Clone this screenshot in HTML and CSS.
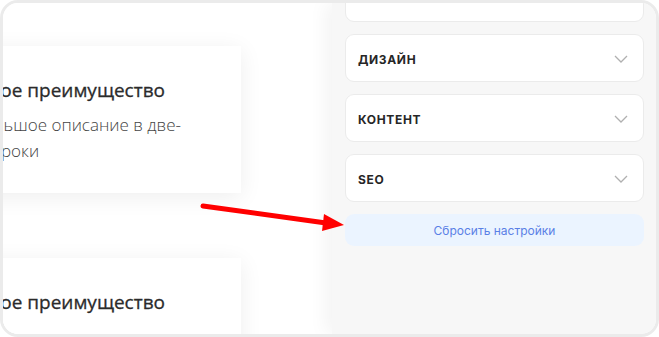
FILE: index.html
```html
<!DOCTYPE html>
<html lang="ru">
<head>
<meta charset="utf-8">
<link rel="stylesheet" href="styles.css">
</head>
<body>
<div class="frame">
  <div class="canvas">
    <div class="feature">
      <h3 class="feature-title">Главное преимущество</h3>
      <p class="feature-text">Небольшое описание в две-три строки</p>
    </div>
    <div class="feature">
      <h3 class="feature-title">Главное преимущество</h3>
      <p class="feature-text">Небольшое описание в две-три строки</p>
    </div>
  </div>
  <div class="panel">
    <div class="section section-cut"></div>
    <div class="section"><span class="section-label">Дизайн</span><svg class="chev" viewBox="0 0 14 8"><path d="M1 1l6 6 6-6"/></svg></div>
    <div class="section"><span class="section-label">Контент</span><svg class="chev" viewBox="0 0 14 8"><path d="M1 1l6 6 6-6"/></svg></div>
    <div class="section"><span class="section-label">SEO</span><svg class="chev" viewBox="0 0 14 8"><path d="M1 1l6 6 6-6"/></svg></div>
    <button class="reset">Сбросить настройки</button>
  </div>
  <svg class="pointer" viewBox="0 0 659 337" width="659" height="337">
    <path d="M203 206 L326 223" stroke="#ff0000" stroke-width="5" stroke-linecap="round" fill="none"/>
    <path d="M324 214 L344 225 L322 231 Z" fill="#ff0000"/>
  </svg>
</div>
</body>
</html>
```
FILE: styles.css
```css
* { box-sizing: border-box; }
html, body { margin: 0; padding: 0; background: #ffffff; }
.frame {
  position: relative;
  width: 659px;
  height: 337px;
  border: 3px solid #ebebeb;
  border-radius: 18px;
  overflow: hidden;
  display: flex;
  background: #ffffff;
}
.canvas {
  flex: 0 0 329px;
  overflow: hidden;
  padding-top: 43px;
  display: flex;
  flex-direction: column;
  gap: 65px;
  background: #ffffff;
}
.feature {
  flex: 0 0 auto;
  width: 321px;
  margin-left: -83px;
  background: #ffffff;
  padding: 31px 50px 29px 33px;
  box-shadow: 0 4px 22px rgba(0, 0, 0, 0.07);
  font-family: "Open Sans", sans-serif;
}
.feature-title {
  margin: 0 0 9px -7px;
  font-size: 19px;
  font-weight: 500;
  -webkit-text-stroke: 0.3px #2b2b2b;
  color: #2b2b2b;
  line-height: 26px;
  white-space: nowrap;
}
.feature-text {
  margin: 0;
  font-size: 17px;
  font-weight: 300;
  color: #444;
  line-height: 26px;
}
.panel {
  position: relative;
  z-index: 1;
  flex: 1;
  background: #f7f7f7;
  box-shadow: -6px 0 18px rgba(0, 0, 0, 0.05);
  padding: 0 12px 0 13px;
  display: flex;
  flex-direction: column;
  gap: 12px;
  font-family: Inter, "Noto Sans", sans-serif;
}
.section {
  height: 48px;
  background: #ffffff;
  border: 1px solid #ebebeb;
  border-radius: 9px;
  display: flex;
  align-items: center;
  justify-content: space-between;
  padding: 2px 15px 0 12px;
  flex: 0 0 auto;
}
.section-cut { margin-top: -29px; }
.section-label {
  font-size: 12px;
  font-weight: 700;
  letter-spacing: 0.65px;
  text-transform: uppercase;
  color: #262626;
}
.chev {
  width: 14px;
  height: 8px;
  fill: none;
  stroke: #b0b0b0;
  stroke-width: 1.3;
}
.reset {
  height: 32px;
  border: 0;
  border-radius: 9px;
  background: #ebf4ff;
  color: #5a80e6;
  font-family: Inter, "Noto Sans", sans-serif;
  font-size: 12px;
  cursor: pointer;
}
.pointer {
  position: absolute;
  left: -3px;
  top: -3px;
  z-index: 2;
  pointer-events: none;
}
```
